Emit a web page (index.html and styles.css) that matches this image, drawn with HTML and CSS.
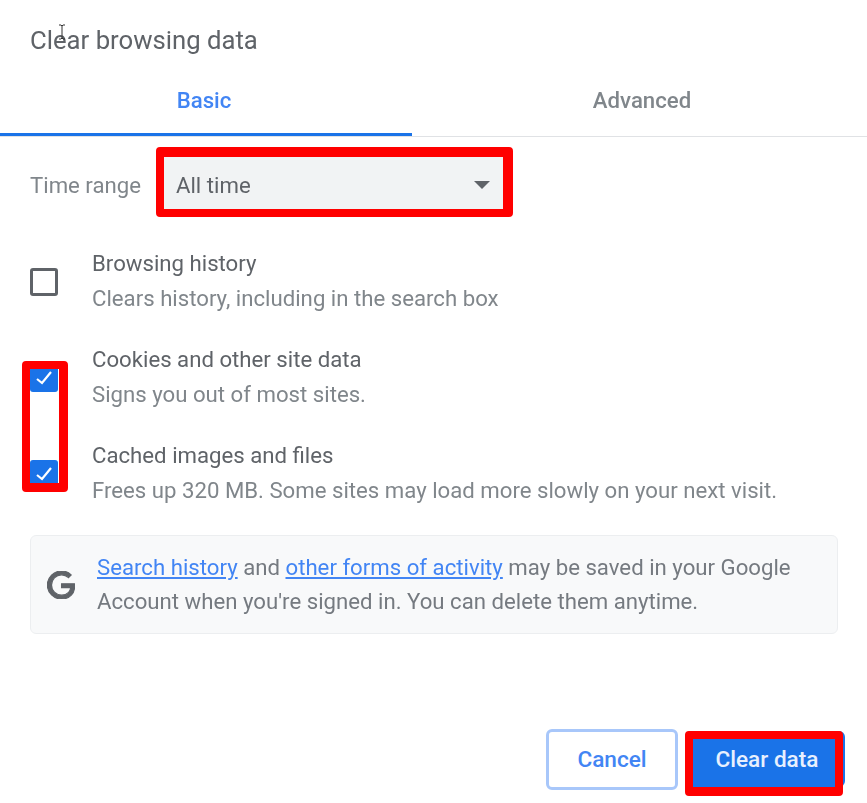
FILE: index.html
```html
<!DOCTYPE html>
<html lang="en">
<head>
  <meta charset="UTF-8">
  <title>Clear browsing data</title>
  <link rel="stylesheet" href="styles.css">
</head>
<body>

  <div class="dialog">
    <h1 class="title">Clear browsing data</h1>
    <svg class="cursor" width="10" height="16" viewBox="0 0 10 16">
      <path d="M2 1h2l1 1 1-1h2M5 2v12M2 15h2l1-1 1 1h2" fill="none" stroke="#333" stroke-width="1"/>
    </svg>

    <div class="tabs">
      <div class="tab tabActive">Basic</div>
      <div class="tab">Advanced</div>
    </div>

    <div class="rangeRow">
      <span class="rangeLabel">Time range</span>
      <div class="select">
        <span>All time</span>
        <span class="arrow"></span>
      </div>
    </div>

    <div class="options">
      <div class="option">
        <span class="check"></span>
        <div class="optionText">
          <div class="optionName">Browsing history</div>
          <div class="optionDesc">Clears history, including in the search box</div>
        </div>
      </div>
      <div class="option">
        <span class="check checked">
          <svg width="28" height="28" viewBox="0 0 28 28"><path d="M7 15l5 4 9-11" fill="none" stroke="#fff" stroke-width="2.2"/></svg>
        </span>
        <div class="optionText">
          <div class="optionName">Cookies and other site data</div>
          <div class="optionDesc">Signs you out of most sites.</div>
        </div>
      </div>
      <div class="option">
        <span class="check checked">
          <svg width="28" height="28" viewBox="0 0 28 28"><path d="M7 15l5 4 9-11" fill="none" stroke="#fff" stroke-width="2.2"/></svg>
        </span>
        <div class="optionText">
          <div class="optionName">Cached images and files</div>
          <div class="optionDesc">Frees up 320 MB. Some sites may load more slowly on your next visit.</div>
        </div>
      </div>
      <div class="checkMark"></div>
    </div>

    <div class="notice">
      <svg class="gLogo" width="28" height="28" viewBox="0 0 24 24">
        <path fill="#5f6368" stroke="#5f6368" stroke-width="1" d="M12.48 10.92v3.28h7.84c-.24 1.84-.853 3.187-1.787 4.133-1.147 1.147-2.933 2.4-6.053 2.4-4.827 0-8.6-3.893-8.6-8.72s3.773-8.72 8.6-8.72c2.6 0 4.507 1.027 5.907 2.347l2.307-2.307C18.747 1.44 16.133 0 12.48 0 5.867 0 .307 5.387.307 12s5.56 12 12.173 12c3.573 0 6.267-1.173 8.373-3.36 2.16-2.16 2.84-5.213 2.84-7.667 0-.76-.053-1.467-.173-2.053H12.48z"/>
      </svg>
      <p><a href="#">Search history</a> and <a href="#">other forms of activity</a> may be saved in your Google Account when you're signed in. You can delete them anytime.</p>
    </div>

    <div class="buttons">
      <button class="btn btnCancel">Cancel</button>
      <button class="btn btnClear">Clear data<span class="clearMark"></span></button>
    </div>
  </div>

</body>
</html>
```

FILE: styles.css
```css
html, body {
  margin: 0;
  padding: 0;
  background: #fff;
}
body {
  width: 867px;
  height: 803px;
  overflow: hidden;
  font-family: Roboto, "Liberation Sans", sans-serif;
  font-size: 22.2px;
  color: #5f6368;
}
.dialog {
  position: relative;
  filter: blur(0.6px);
}
.title {
  margin: 0;
  padding: 24px 0 0 30px;
  font-size: 25.7px;
  font-weight: 400;
  line-height: 32px;
  color: #5f6368;
}
.cursor {
  position: absolute;
  left: 57px;
  top: 24px;
}
.tabs {
  display: grid;
  grid-template-columns: 412px 1fr;
  margin-top: 8px;
  height: 72px;
  border-bottom: 1px solid #e0e2e5;
}
.tab {
  display: flex;
  align-items: center;
  justify-content: center;
  padding-left: 5px;
  height: 72px;
  box-sizing: border-box;
  font-weight: 500;
  color: #80868b;
}
.tabActive {
  padding: 3px 4px 0 0;
  color: #4285f4;
  border-bottom: 3px solid #1a73e8;
}
.rangeRow {
  display: flex;
  align-items: center;
  gap: 15px;
  padding: 10px 0 0 30px;
}
.rangeLabel {
  padding-top: 6px;
  color: #80868b;
}
.select {
  display: flex;
  align-items: center;
  justify-content: space-between;
  width: 314px;
  height: 48px;
  padding: 4px 13px 0 12px;
  border: solid #f00;
  border-width: 10px 10px 8px 8px;
  border-radius: 4px;
  background: #f1f3f4;
  color: #5f6368;
}
.arrow {
  width: 0;
  height: 0;
  border-left: 8px solid transparent;
  border-right: 8px solid transparent;
  border-top: 8px solid #5f6368;
}
.options {
  position: relative;
  margin-top: 17px;
  padding-left: 30px;
}
.option {
  display: flex;
  align-items: center;
  gap: 34px;
  height: 96px;
}
.optionText {
  padding-bottom: 2px;
}
.optionName {
  line-height: 35px;
  color: #5f6368;
}
.optionDesc {
  line-height: 35px;
  color: #80868b;
}
.check {
  flex: none;
  width: 28px;
  height: 28px;
  box-sizing: border-box;
  border: 3px solid #5f6368;
  border-radius: 3px;
}
.checked {
  border: none;
  background: #1a73e8;
}
.check svg {
  display: block;
}
/* red marker drawn over the two ticked boxes */
.checkMark {
  position: absolute;
  left: 22px;
  top: 127px;
  width: 29px;
  height: 114px;
  border: 8px solid #f00;
  border-right-width: 9px;
  border-bottom-width: 9px;
  border-radius: 4px;
}
.notice {
  display: flex;
  align-items: center;
  gap: 22px;
  margin: 13px 29px 0 30px;
  height: 99px;
  padding-left: 16px;
  box-sizing: border-box;
  background: #f8f9fa;
  border: 1px solid #eceef0;
  border-radius: 6px;
  color: #757a80;
}
.gLogo {
  flex: none;
}
.notice p {
  margin: 0;
  padding-bottom: 2px;
  line-height: 34px;
}
.notice a {
  color: #4285f4;
}
.buttons {
  display: flex;
  justify-content: flex-end;
  align-items: flex-start;
  gap: 7px;
  margin-top: 95px;
  padding-right: 22px;
}
.btn {
  position: relative;
  font-family: inherit;
  font-size: 22.6px;
  font-weight: 500;
  border-radius: 6px;
}
.btnCancel {
  width: 132px;
  height: 61px;
  background: #fff;
  color: #4285f4;
  border: 3px solid #a8c7fa;
}
.btnClear {
  width: 160px;
  height: 56px;
  margin-top: 2px;
  padding: 0 0 0 4px;
  background: #1a73e8;
  color: #e8f0fe;
  border: none;
}
.clearMark {
  position: absolute;
  left: 0;
  top: 0;
  width: 142px;
  height: 48px;
  border: 8px solid #f00;
  border-bottom-width: 9px;
  border-radius: 4px;
}
```
